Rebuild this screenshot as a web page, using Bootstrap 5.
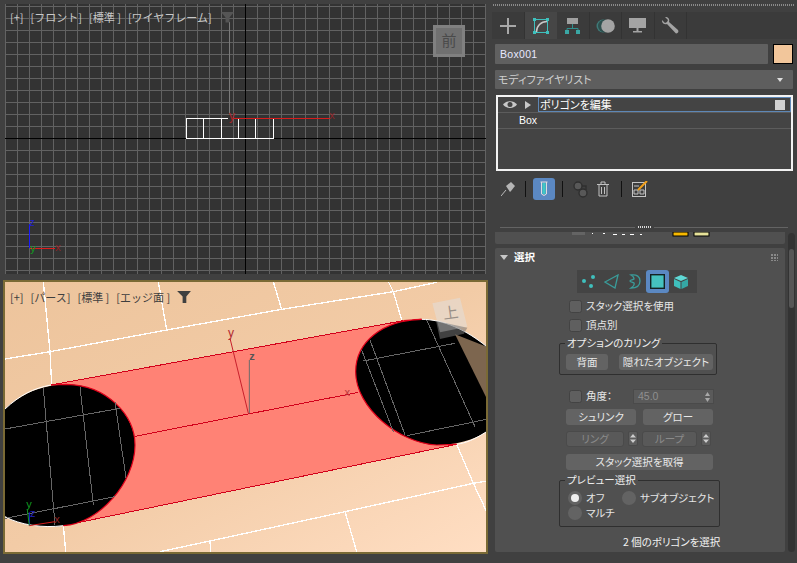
<!DOCTYPE html>
<html lang="ja"><head><meta charset="utf-8"><title>Editable Poly</title>
<link href="https://cdn.jsdelivr.net/npm/bootstrap@5.3.0/dist/css/bootstrap.min.css" rel="stylesheet">
<style>
html,body{height:563px;overflow:hidden}
body{background:#404040;font-family:"Noto Sans CJK JP","Liberation Sans",sans-serif;font-size:10.5px;color:#e6e6e6;line-height:1}
.shell{width:797px;height:563px}
.flex-none{flex:none}
.leftcol{width:490px;padding:4px 3px 0 3px}
.vp-top{position:relative;width:481px;height:270px;margin-left:2px;background:#333}
.vp-bot{position:relative;width:485px;height:274px;margin-top:6px;border:2px solid #7a6a35;background:#edc59e}
.vp-top svg,.vp-bot svg{display:block}
.vp-label{position:absolute;top:8px;left:5px;color:#c8c8c8;font-size:11px;gap:7px;white-space:nowrap}
.vp-bot .vp-label{left:5px;top:9px;color:#3e3e3e;gap:7px;align-items:center}
.rightcol{width:307px;padding-top:4px}
.dots{height:2px;margin:0 3px;background:repeating-linear-gradient(90deg,#8a8a8a 0 1px,transparent 1px 2px)}
.tabbar{margin-top:6px;height:27px;margin-left:2px;background:#3b3b3b}
.tabcell{width:32.5px;height:27px;border-right:1px solid #333}
.tabcell.on{background:#464646;border-right:0}
.namebar{margin:5px 4px 0 5px;gap:5px;height:20px}
.nameinput{flex:1;background:#606060;color:#e8e8ff;font-size:10.5px;padding:0 5px;border:0;border-radius:1px;height:20px;font-family:"Liberation Sans",sans-serif;letter-spacing:.3px}
.form-control.nameinput:focus{background:#606060;color:#e8e8ff;box-shadow:none}
.swatch{width:20px;height:20px;background:#f2c69b;border:1px solid #000}
.modlist-dd{margin:6px 4px 0 5px;height:19px;background:#5e5e5e;padding:0 10px 0 3px;color:#cfcfcf;border-radius:1px;font-feature-settings:"palt";font-size:11px}
.ddarrow{width:0;height:0;border:3px solid transparent;border-width:4px 3.5px 0;border-top-color:#ddd}
.stackbox{margin:6px 4px 0 6px;height:76px;border:2px solid #f2f2f2;background:#444;border-radius:0}
.stackrow{border:0;border-bottom:1px solid #5c5c5c;background:transparent;color:#fff;padding:0}
.stackrow.r1{padding-left:5px;height:16px}
.stackrow.r2{padding-left:21px;font-family:"Liberation Sans",sans-serif;font-size:10.5px;height:16px}
.tri2{margin:0 7px 0 8px}
.curmod{flex:1;height:15px;border:1px solid #5d87b6;padding:0 1px;color:#fff;font-size:11px;font-feature-settings:"palt"}
.modbox{width:10px;height:10px;background:#d2d2d2;margin-right:4px}
.toolrow{margin-top:7px;margin-left:7px;height:22px}
.toolcell{width:22px;height:22px}
.toolcell.on{background:#5b88c2;border-radius:3px}
.tsep{width:1px;height:16px;background:#111;margin:0 7px}
.tsep.first{margin-left:6px}
.handle{margin-top:26px;margin-left:10px;width:288px;gap:3px;height:2px}
.handle i{flex:1;height:1px;background:#636363;display:block}
.handle b{width:13px;height:2px;background:repeating-linear-gradient(90deg,#d8d8d8 0 1px,transparent 1px 2px);display:block}
.rollwrap{position:relative;margin-top:4px;margin-left:5px;font-feature-settings:"palt"}
.stub{width:290px;height:12px;background:#505050;border-radius:0 0 2px 2px;overflow:hidden;position:relative}
.stubbits{position:absolute;inset:0 0 auto 0;height:4px}
.roll{width:290px;height:304px;margin-top:4px;background:#505050;border-radius:2px}
.rollhead{height:22px;padding:0 0 4px 5px;font-weight:700;color:#fff;font-size:10.5px}
.rolltri{width:0;height:0;border:4px solid transparent;border-top:5px solid #c8c8c8;border-bottom:0;margin-right:6px}
.grip{margin-left:auto;margin-right:7px;width:7px;height:7px;background:radial-gradient(circle at 1px 1px,#8a8a8a 1px,transparent 1px) 0 0/3px 3px}
.mode-strip{margin-left:82px;width:120px;height:23px;background:#444}
.modecell{width:23px;height:23px}
.modecell.on{background:#5b88c2;border-radius:3px}
.ck{width:13px;height:13px;background:#5f5f5f;border:1px solid #434343;border-radius:1px;margin:0!important;flex:none}
.ckrow{margin-left:74px;height:13px;gap:4px}
.mt6{margin-top:6px}
.mt7{margin-top:7px}
.gbox{position:relative;margin-left:64px;border:1px solid #2f2f2f;border-radius:2px}
.gtitle{position:absolute;top:-6px;left:5px;padding:0 2px;background:#505050;font-size:10.5px;color:#eee;white-space:nowrap}
.mx-btn{--bs-btn-padding-y:0;--bs-btn-padding-x:0;--bs-btn-font-size:10.5px;--bs-btn-line-height:1;height:16px;background:#636363;border:0;color:#e8e8e8;border-radius:3px;font-family:inherit;font-feature-settings:"palt";display:flex;align-items:center;justify-content:center;white-space:nowrap}
.mx-btn:disabled{background:#595959;color:#8a8a8a;opacity:1;border:1px solid #4a4a4a}
.spin{height:15px;width:81px;background:#5a5a5a;border:1px solid #4a4a4a;color:#8f8f8f;font-size:10.5px;font-family:"Liberation Sans",sans-serif;padding:0 3px 0 4px}
.smallspin{width:10px;height:15px;background:#5d5d5d;border:1px solid #4a4a4a;border-radius:2px}
.rowb{margin-left:71px;gap:7px}
.radio{width:14px;height:14px;border-radius:50%;background:#636363;margin:0!important;border:0;flex:none}
.form-check-input.radio:checked{background-color:#636363;background-image:none;border:0}
.radiowrap{position:relative;width:14px;height:14px;flex:none}
.radiowrap.on::after{content:"";position:absolute;inset:3px;border-radius:50%;background:#eee}
.status{margin:10px 0 0 128px;color:#f2f2f2;white-space:nowrap}
.sbar{position:absolute;left:293px;top:1px;width:7px;height:319px;background:#333;border-radius:4px}
.sthumb{margin:16px 1px 0;height:59px;background:#565656;border-radius:3px}
.gb1{width:158px;height:32px;margin-top:11px}
.gb1in{padding:10px 3px 0 6px;gap:11px}
.b42{width:42px}.b94{width:94px}.b70{width:70px}.b58{width:58px}.b55{width:55px}.b147{width:147px}
.angrow{margin-top:14px;height:15px}
.ang{width:43px}
.r409{margin-top:5px}.r431{margin-top:6px;gap:4px}.r455{margin-top:7px}
.gb2{width:161px;height:47px;margin-top:10px}
.pvrow{padding:10px 0 0 8px;white-space:nowrap}
.pvrow2{padding:1px 0 0 8px}
.pvl1{width:36px;margin-left:4px}
</style></head><body>
<div class="shell d-flex">
<div class="leftcol flex-none">
 <div class="vp-top">
  <svg width="481" height="270" viewBox="5 4 481 270" shape-rendering="crispEdges">
   <defs><pattern id="gr" patternUnits="userSpaceOnUse" x="5" y="6" width="12" height="12"><path d="M0 .5H12M.5 0V12" stroke="#626262" stroke-width="1" fill="none"/></pattern></defs>
   <rect x="5" y="4" width="481" height="270" fill="#333"/>
   <rect x="5" y="4" width="481" height="270" fill="url(#gr)"/>
   <path d="M5 138.500H486M245.500 4V274" stroke="#000" stroke-width="1"/>
   <path d="M229.500 22V115" stroke="#7a7a7a"/>
   <path d="M228 118.500H186.500V138.500H273.500V118.500M203.500 118.500V138.500M221.500 118.500V138.500M238.500 118.500V138.500M255.500 118.500V138.500" stroke="#fff" stroke-width="1" fill="none"/>
   <path d="M232 118.500H330" stroke="#d71c1c" stroke-width="1"/>
   <rect x="433" y="25" width="32" height="32" fill="#808080"/>
   <rect x="436" y="28" width="26" height="26" fill="#707070"/>
   <path d="M29.500 248V224" stroke="#1a1aff"/><path d="M30 248.500H55" stroke="#e01c1c"/>
   <g shape-rendering="auto">
    <text x="232" y="120" fill="#a5262a" font-size="12" text-anchor="middle" font-family="Liberation Sans">y</text>
    <text x="332" y="119" fill="#8f2427" font-size="11" text-anchor="middle" font-family="Liberation Sans">x</text>
    <path d="M221 12h13l-4.500 5.500v5h-4v-5z" fill="#555"/>
    <text x="449" y="46" text-anchor="middle" font-size="15" fill="#4a4a4a" font-family="Noto Sans CJK JP">前</text>
    <text x="32" y="226" fill="#2222cc" font-size="11" text-anchor="middle" font-family="Liberation Sans">z</text>
    <text x="33" y="252" fill="#119a22" font-size="11" text-anchor="middle" font-family="Liberation Sans">y</text>
    <text x="58" y="251" fill="#8f2427" font-size="11" text-anchor="middle" font-family="Liberation Sans">x</text>
   </g>
  </svg>
  <div class="vp-label d-flex"><span>[+]</span><span>[フロント]</span><span>[標準 ]</span><span>[ワイヤフレーム]</span></div>
 </div>
 <div class="vp-bot">
  <svg width="481" height="270" viewBox="15 21 1443 810">
   <defs><linearGradient id="peach" x1="0" y1="0" x2="1" y2="1"><stop offset="0" stop-color="#edc49c"/><stop offset=".5" stop-color="#f2cba6"/><stop offset="1" stop-color="#ffdec3"/></linearGradient></defs>
   <rect x="15" y="21" width="1443" height="810" fill="url(#peach)"/>
   <g stroke="#fff" stroke-width="4" fill="none" shape-rendering="crispEdges">
    <path d="M130 20 150 230 155 330M15 252 150 230 500 165 845 103 1180 50 1310 22M475 20 500 165M820 20 845 103M1165 20 1180 50 1205 135"/>
    <path d="M190 752 197 830M480 830 630 798 1035 710 1420 625 1460 618M630 798 632 830M1035 710 1070 830M1370 508 1420 625 1460 710"/>
   </g>
   <polygon points="153,330 1210,137 1370,508 190,752" fill="#ff8275"/>
   <path d="M153 330 1210 137M190 752 1370 508M405 484 1075 352" stroke="#d2001a" stroke-width="3" fill="none" shape-rendering="crispEdges"/>
   <path d="M15 402C60 360 120 330 200 328C320 330 405 420 405 510C405 620 300 745 190 752C130 760 60 750 15 725Z" fill="#000"/>
   <path d="M15 402C60 360 100 340 153 330M190 752C130 760 60 750 15 725" stroke="#fff" stroke-width="3" fill="none"/>
   <path d="M153 330 200 328C320 330 405 420 405 510C405 620 300 745 190 752" stroke="#e0001a" stroke-width="3.500" fill="none"/>
   <path d="M1067 290C1067 200 1150 135 1265 133C1330 133 1400 165 1460 215V470C1420 495 1370 510 1310 510C1200 505 1067 400 1067 290Z" fill="#000"/>
   <polygon points="1365,178 1460,215 1460,370" fill="#7d664f"/>
   <path d="M1265 133C1330 133 1400 165 1460 215M1460 470C1420 495 1400 503 1370 508" stroke="#fff" stroke-width="3" fill="none"/>
   <path d="M1210 137 1265 133C1150 135 1067 200 1067 290C1067 400 1200 505 1310 510L1370 508" stroke="#e0001a" stroke-width="3.500" fill="none"/>
   <g stroke="#666" stroke-width="3" fill="none" shape-rendering="crispEdges">
    <path d="M15 462 360 400M130 340 165 750M240 335 280 690M345 380 378 610M15 730 345 665"/>
    <path d="M1090 258 1365 205M1085 225 1180 470M1110 195 1215 480M1280 135 1425 455M1220 482 1460 433"/>
   </g>
   <path d="M745 415 690 190" stroke="#c8202c" stroke-width="3"/>
   <path d="M748 415V255" stroke="#6a6a6a" stroke-width="3"/>
   <text x="693" y="185" fill="#b0282f" font-size="36" text-anchor="middle" font-family="Liberation Sans">y</text>
   <text x="756" y="256" fill="#555" font-size="33" font-weight="700" text-anchor="middle" font-family="Liberation Sans">z</text>
   <text x="1042" y="362" fill="#bb3a3f" font-size="33" text-anchor="middle" font-family="Liberation Sans">x</text>
   <path d="M88 752V712" stroke="#1818d8" stroke-width="3"/><path d="M88 752 82 705" stroke="#119a22" stroke-width="3"/><path d="M88 752 165 740" stroke="#d21c1c" stroke-width="3"/>
   <text x="87" y="698" fill="#119a22" font-size="33" text-anchor="middle" font-family="Liberation Sans">y</text>
   <text x="98" y="727" fill="#2222bb" font-size="33" text-anchor="middle" font-family="Liberation Sans">z</text>
   <text x="171" y="744" fill="#8f2427" font-size="33" text-anchor="middle" font-family="Liberation Sans">x</text>
   <polygon points="1297,85 1380,68 1402,155 1320,172" fill="#e0e0e0" fill-opacity=".5"/>
   <polygon points="1308,138 1402,158 1392,176 1320,192" fill="#777" fill-opacity=".55"/>
   <text x="1352" y="130" font-size="46" fill="#9a9088" text-anchor="middle" transform="rotate(-8 1352 115)" font-family="Noto Sans CJK JP">上</text>
  </svg>
  <div class="vp-label d-flex"><span>[+]</span><span>[パース]</span><span>[標準 ]</span><span>[エッジ面 ]</span>
   <svg width="14" height="12" viewBox="0 0 15 13"><path d="M0 0h15l-5 6v7H6V6z" fill="#404040"/></svg></div>
 </div>
</div>
<div class="rightcol flex-none">
 <div class="dots"></div>
 <div class="tabbar d-flex">
  <div class="tabcell d-flex align-items-center justify-content-center"><svg width="18" height="18"><path d="M9 1V17M1 9H17" stroke="#a8a8a8" stroke-width="2"/></svg></div>
  <div class="tabcell on d-flex align-items-center justify-content-center"><svg width="16" height="16" fill="none"><rect x="1.500" y="1.500" width="13" height="13" stroke="#3fc0bd"/><path d="M3.500 14C3.500 8 8 3.500 14 3.500" stroke="#c8c8c8" stroke-width="1.500"/><g fill="#3fc0bd"><rect x="0" y="0" width="3" height="3"/><rect x="13" y="0" width="3" height="3"/><rect x="0" y="13" width="3" height="3"/><rect x="13" y="13" width="3" height="3"/></g></svg></div>
  <div class="tabcell d-flex align-items-center justify-content-center"><svg width="15" height="16" fill="none"><rect x="2" y="0" width="11" height="6" fill="#a0a0a0"/><path d="M7.500 6V10M2 13V10.500H13V13" stroke="#2f8f8d"/><rect x="0" y="12" width="4" height="4" fill="#3aa7a5"/><rect x="11" y="12" width="4" height="4" fill="#3aa7a5"/></svg></div>
  <div class="tabcell d-flex align-items-center justify-content-center"><svg width="19" height="14"><circle cx="7" cy="7" r="6.500" fill="#3f7a78"/><circle cx="8.500" cy="7" r="6.500" fill="#2f4f4e"/><circle cx="12" cy="7" r="6.800" fill="#a4a4a4"/></svg></div>
  <div class="tabcell d-flex align-items-center justify-content-center"><svg width="17" height="16"><rect x="0" y="0" width="17" height="10" fill="#a4a4a4"/><rect x="7.500" y="10" width="2" height="3" fill="#a4a4a4"/><rect x="4" y="13" width="9" height="1.500" fill="#a4a4a4"/></svg></div>
  <div class="tabcell d-flex align-items-center justify-content-center"><svg width="17" height="17" viewBox="0 0 17 17"><path d="M0 3 3 6 5 5 6 3 3 0C6 -.5 8 2 7 5L16 13Q17 15 15.500 16Q14 17 13 15.500L5 7C2.500 8 -.5 6 0 3Z" fill="#a4a4a4"/></svg></div>
 </div>
 <div class="namebar d-flex"><input class="form-control nameinput" value="Box001"><div class="swatch"></div></div>
 <div class="modlist-dd d-flex align-items-center justify-content-between"><span>モディファイヤリスト</span><span class="ddarrow"></span></div>
 <div class="list-group stackbox">
  <div class="list-group-item stackrow r1 d-flex align-items-center">
   <svg width="14" height="9" viewBox="0 0 14 9"><path d="M0 4.500C3 0 11 0 14 4.500C11 9 3 9 0 4.500Z" fill="#c8c8c8"/><circle cx="7" cy="4.500" r="2.500" fill="#444"/></svg>
   <svg width="6" height="8" class="tri2"><path d="M0 0 6 4 0 8Z" fill="#c8c8c8"/></svg>
   <div class="curmod d-flex align-items-center justify-content-between"><span>ポリゴンを編集</span><span class="modbox"></span></div>
  </div>
  <div class="list-group-item stackrow r2 d-flex align-items-center">Box</div>
 </div>
 <div class="toolrow d-flex align-items-center">
  <div class="toolcell d-flex align-items-center justify-content-center"><svg width="14" height="14"><path d="M0 14 5 8" stroke="#bbb"/><path d="M5 4 10 0 14 4 10 9 9 10Z" fill="#b5b5b5"/></svg></div>
  <div class="tsep first"></div>
  <div class="toolcell on d-flex align-items-center justify-content-center"><svg width="10" height="16" fill="none"><path d="M1.500 1H8.500M2.500 1V13Q5 16 7.500 13V1" stroke="#ddd"/><rect x="3.500" y="2" width="3" height="11" fill="#3fc8c4"/></svg></div>
  <div class="tsep"></div>
  <div class="toolcell d-flex align-items-center justify-content-center"><svg width="17" height="17" fill="none" stroke="#2f2f2f" stroke-width="1.400"><circle cx="5" cy="5" r="4" fill="#585858"/><circle cx="10" cy="12" r="4" fill="#585858"/><path d="M9 5H13V9"/></svg></div>
  <div class="toolcell d-flex align-items-center justify-content-center"><svg width="12" height="16" fill="none" stroke="#c0c0c0"><path d="M0 3.500H12M4 3V1H8V3M2 4V15H10V4M4.500 6V13M7.500 6V13"/></svg></div>
  <div class="tsep"></div>
  <div class="toolcell d-flex align-items-center justify-content-center"><svg width="16" height="16" fill="none"><rect x=".5" y="1.500" width="13" height="14" fill="#3d3d3d" stroke="#c4c4c4"/><path d="M2 5H7M2 9H6V13H2ZM8 9H12V13H8Z" stroke="#c4c4c4"/><path d="M6 9 15 0" stroke="#f0a01c" stroke-width="2"/></svg></div>
 </div>
 <div class="handle d-flex align-items-center"><i></i><b></b><i></i></div>
 <div class="rollwrap">
  <div class="stub"><div class="stubbits d-flex">
   <svg width="290" height="5"><rect x="77" y="0" width="13" height="3" fill="#646464"/><g fill="#fff"><rect x="97" y="1" width="1" height="1"/><rect x="108" y="1" width="2" height="1"/><rect x="118" y="2" width="4" height="1"/><rect x="127" y="2" width="3" height="1"/><rect x="135" y="2" width="4" height="1"/><rect x="145" y="2" width="2" height="1"/></g><rect x="178" y="0" width="15" height="4" fill="#f7b900" stroke="#000"/><rect x="199" y="0" width="15" height="4" fill="#e6e29a" stroke="#000"/></svg>
  </div></div>
  <div class="roll">
   <div class="rollhead d-flex align-items-center"><span class="rolltri"></span><span>選択</span><span class="grip"></span></div>
   <div class="mode-strip d-flex">
    <div class="modecell d-flex align-items-center justify-content-center"><svg width="15" height="15" fill="#3fc0bd"><circle cx="3" cy="7" r="2"/><circle cx="12" cy="3" r="2"/><circle cx="10" cy="12" r="2"/></svg></div>
    <div class="modecell d-flex align-items-center justify-content-center"><svg width="15" height="15" fill="none" stroke="#3a9b99" stroke-width="1.300"><path d="M1 8 14 1 11 14Z"/></svg></div>
    <div class="modecell d-flex align-items-center justify-content-center"><svg width="13" height="15" fill="none" stroke="#3a9b99" stroke-width="1.300"><path d="M3 1C9 0 12 3 12 7C12 11 9 14 3 14C6 12 7 11 6 9C5 8 2 8 2 7C2 6 5 6 6 5C6 3 5 2 3 1Z"/></svg></div>
    <div class="modecell on d-flex align-items-center justify-content-center"><svg width="15" height="15"><rect x=".7" y=".7" width="13.600" height="13.600" fill="#45c2bf" stroke="#142222" stroke-width="1.400"/></svg></div>
    <div class="modecell d-flex align-items-center justify-content-center"><svg width="16" height="16"><path d="M8 1 15 4 8 7 1 4Z" fill="#5fd8d5"/><path d="M1 5 7.500 8V15L1 12Z" fill="#3fbfbc"/><path d="M15 5 8.500 8V15L15 12Z" fill="#35a8a5"/></svg></div>
   </div>
   <div class="ckrow d-flex align-items-center mt7"><input type="checkbox" class="form-check-input ck"><span>スタック選択を使用</span></div>
   <div class="ckrow d-flex align-items-center mt6"><input type="checkbox" class="form-check-input ck"><span>頂点別</span></div>
   <div class="gbox gb1"><span class="gtitle">オプションのカリング</span><div class="d-flex gb1in"><button class="btn mx-btn b42">背面</button><button class="btn mx-btn b94">隠れたオブジェクト</button></div></div>
   <div class="ckrow d-flex align-items-center angrow"><input type="checkbox" class="form-check-input ck"><span class="ang">角度：</span><div class="spin d-flex align-items-center justify-content-between"><span>45.0</span><svg width="5" height="10"><path d="M0 4 2.500 0 5 4ZM0 6 2.500 10 5 6Z" fill="#a8a8a8"/></svg></div></div>
   <div class="rowb d-flex r409"><button class="btn mx-btn b70">シュリンク</button><button class="btn mx-btn b70">グロー</button></div>
   <div class="rowb d-flex r431"><button class="btn mx-btn b58" disabled>リング</button><span class="smallspin d-flex align-items-center justify-content-center"><svg width="6" height="9"><path d="M0 3.500 3 0 6 3.500ZM0 5.500 3 9 6 5.500Z" fill="#ccc"/></svg></span><button class="btn mx-btn b55" disabled>ループ</button><span class="smallspin d-flex align-items-center justify-content-center"><svg width="6" height="9"><path d="M0 3.500 3 0 6 3.500ZM0 5.500 3 9 6 5.500Z" fill="#ccc"/></svg></span></div>
   <div class="rowb d-flex r455"><button class="btn mx-btn b147">スタック選択を取得</button></div>
   <div class="gbox gb2"><span class="gtitle">プレビュー選択</span>
    <div class="d-flex align-items-center pvrow"><span class="radiowrap on"><input type="radio" name="pv" class="form-check-input radio" checked></span><span class="pvl1">オフ</span><input type="radio" name="pv" class="form-check-input radio"><span class="ms-1">サブオブジェクト</span></div>
    <div class="d-flex align-items-center pvrow2"><input type="radio" name="pv" class="form-check-input radio"><span class="ms-1">マルチ</span></div>
   </div>
   <div class="status">2 個のポリゴンを選択</div>
  </div>
  <div class="sbar"><div class="sthumb"></div></div>
 </div>
</div>
</div>
<script src="https://cdn.jsdelivr.net/npm/bootstrap@5.3.0/dist/js/bootstrap.bundle.min.js"></script>
</body></html>
